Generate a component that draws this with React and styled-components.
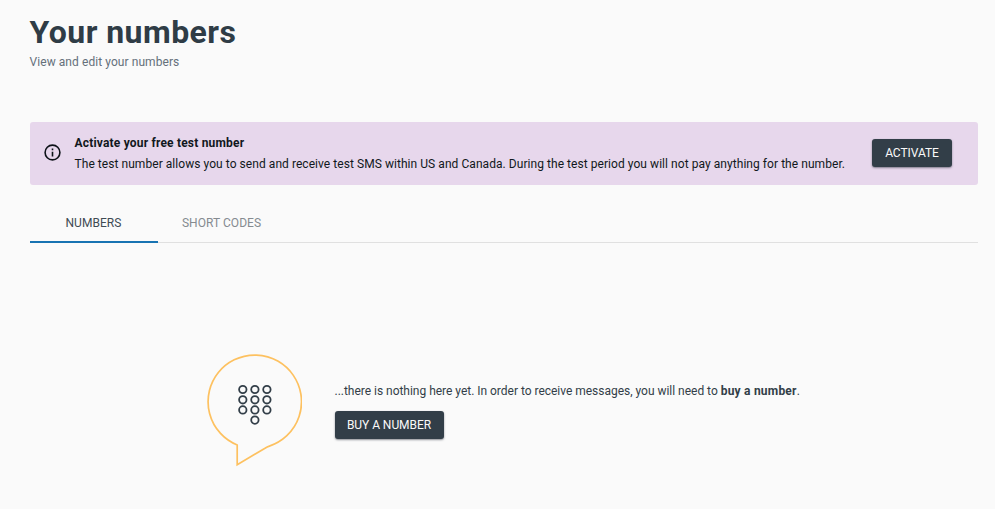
import React from "react";
import styled, { createGlobalStyle } from "styled-components";

const GlobalStyle = createGlobalStyle`
  * { box-sizing: border-box; }
  body {
    margin: 0;
    background: #fafafa;
    color: #323e48;
    font-family: Roboto, "Liberation Sans", sans-serif;
    font-size: 12px;
  }
`;

const Page = styled.main`
  height: 509px;
  padding: 13px 17.5px 0 29.5px;
  overflow: hidden;
`;

const Title = styled.h1`
  margin: 0;
  font-size: 32px;
  line-height: 38px;
  font-weight: 700;
  letter-spacing: 0.45px;
  color: #2f3c46;
`;

const Subtitle = styled.p`
  margin: 0;
  padding-top: 1px;
  line-height: 20px;
  font-size: 12px;
  letter-spacing: 0.07px;
  color: #65707a;
`;

const Banner = styled.section`
  display: flex;
  align-items: center;
  height: 63px;
  margin: 50px 0 0 0;
  padding: 0 25.5px 0 14px;
  border-radius: 3px;
  background: #e7d7ec;
  color: #111820;
`;

const BannerIcon = styled.svg`
  width: 17px;
  height: 17px;
  margin: 0 14px 2px 0;
  flex: none;
`;

const BannerCopy = styled.div`
  flex: 1;
  line-height: 21px;
  white-space: nowrap;
`;

const BannerTitle = styled.div`
  font-size: 12px;
  font-weight: 700;
  letter-spacing: 0.19px;
`;

const BannerText = styled.div`
  font-size: 12px;
  letter-spacing: 0.055px;
`;

const Button = styled.button`
  width: ${(p) => p.$width}px;
  height: 28px;
  padding: 0;
  border: 0;
  border-radius: 3px;
  background: #323e48;
  color: #fafafa;
  font: 400 12px/28px Roboto, "Liberation Sans", sans-serif;
  letter-spacing: -0.05px;
  box-shadow: 0 1px 2px rgba(30, 35, 50, 0.5);
  flex: none;
`;

const BannerButton = styled(Button)`
  margin-bottom: 1px;
`;

const Tabs = styled.nav`
  display: flex;
  height: 39px;
  margin-top: 19px;
  box-shadow: inset 0 -1px #e0e0e0;
`;

const Tab = styled.div`
  width: 128px;
  height: 39px;
  line-height: 39px;
  text-align: center;
  font-size: 12px;
  letter-spacing: 0.05px;
  color: ${(p) => (p.$active ? "#3f4b54" : "#858b90")};
  border-bottom: 2px solid ${(p) => (p.$active ? "#1873b2" : "transparent")};
`;

const EmptyState = styled.section`
  display: flex;
  margin: 110px 0 0 174.5px;
`;

const Bubble = styled.svg`
  width: 98px;
  height: 114px;
  flex: none;
`;

const EmptyCopy = styled.div`
  padding: 28px 0 0 32.5px;
`;

const EmptyText = styled.p`
  margin: 0 0 10px;
  font-size: 12px;
  line-height: 20px;
  letter-spacing: -0.02px;
  white-space: nowrap;
`;

const Strong = styled.strong`
  font-weight: 700;
  letter-spacing: 0.22px;
`;

const keys = [
  [38.8, 37], [50.9, 37], [62.9, 37],
  [38.8, 47.3], [50.9, 47.3], [62.9, 47.3],
  [38.8, 57.4], [50.9, 57.4], [62.9, 57.4],
  [50.9, 67.6],
];

export default function App() {
  return (
    <>
      <GlobalStyle />
      <Page>
        <Title>Your numbers</Title>
        <Subtitle>View and edit your numbers</Subtitle>
        <Banner>
          <BannerIcon viewBox="0 0 17 17" fill="none" stroke="#0d1218">
            <circle cx="8.5" cy="8.5" r="7.4" strokeWidth="1.6" />
            <path d="M8.5 7.7v4.7M8.5 4.6v1.6" strokeWidth="1.6" />
          </BannerIcon>
          <BannerCopy>
            <BannerTitle>Activate your free test number</BannerTitle>
            <BannerText>
              The test number allows you to send and receive test SMS within US and Canada. During the test period you will not pay anything for the number.
            </BannerText>
          </BannerCopy>
          <BannerButton $width={80}>ACTIVATE</BannerButton>
        </Banner>
        <Tabs>
          <Tab $active>NUMBERS</Tab>
          <Tab>SHORT CODES</Tab>
        </Tabs>
        <EmptyState>
          <Bubble viewBox="0 0.5 98 114" fill="none">
            <path
              d="M33.2 92.5A46.7 46.7 0 1 1 65.4 93.6Q63.2 94.3 61 95.8L33.2 112.2Z"
              stroke="#fdc160"
              strokeWidth="1.7"
            />
            {keys.map(([x, y]) => (
              <circle key={`${x}-${y}`} cx={x} cy={y} r="3.7" stroke="#323e48" strokeWidth="1.8" />
            ))}
          </Bubble>
          <EmptyCopy>
            <EmptyText>
              ...there is nothing here yet. In order to receive messages, you will need to <Strong>buy a number</Strong>.
            </EmptyText>
            <Button $width={109}>BUY A NUMBER</Button>
          </EmptyCopy>
        </EmptyState>
      </Page>
    </>
  );
}
